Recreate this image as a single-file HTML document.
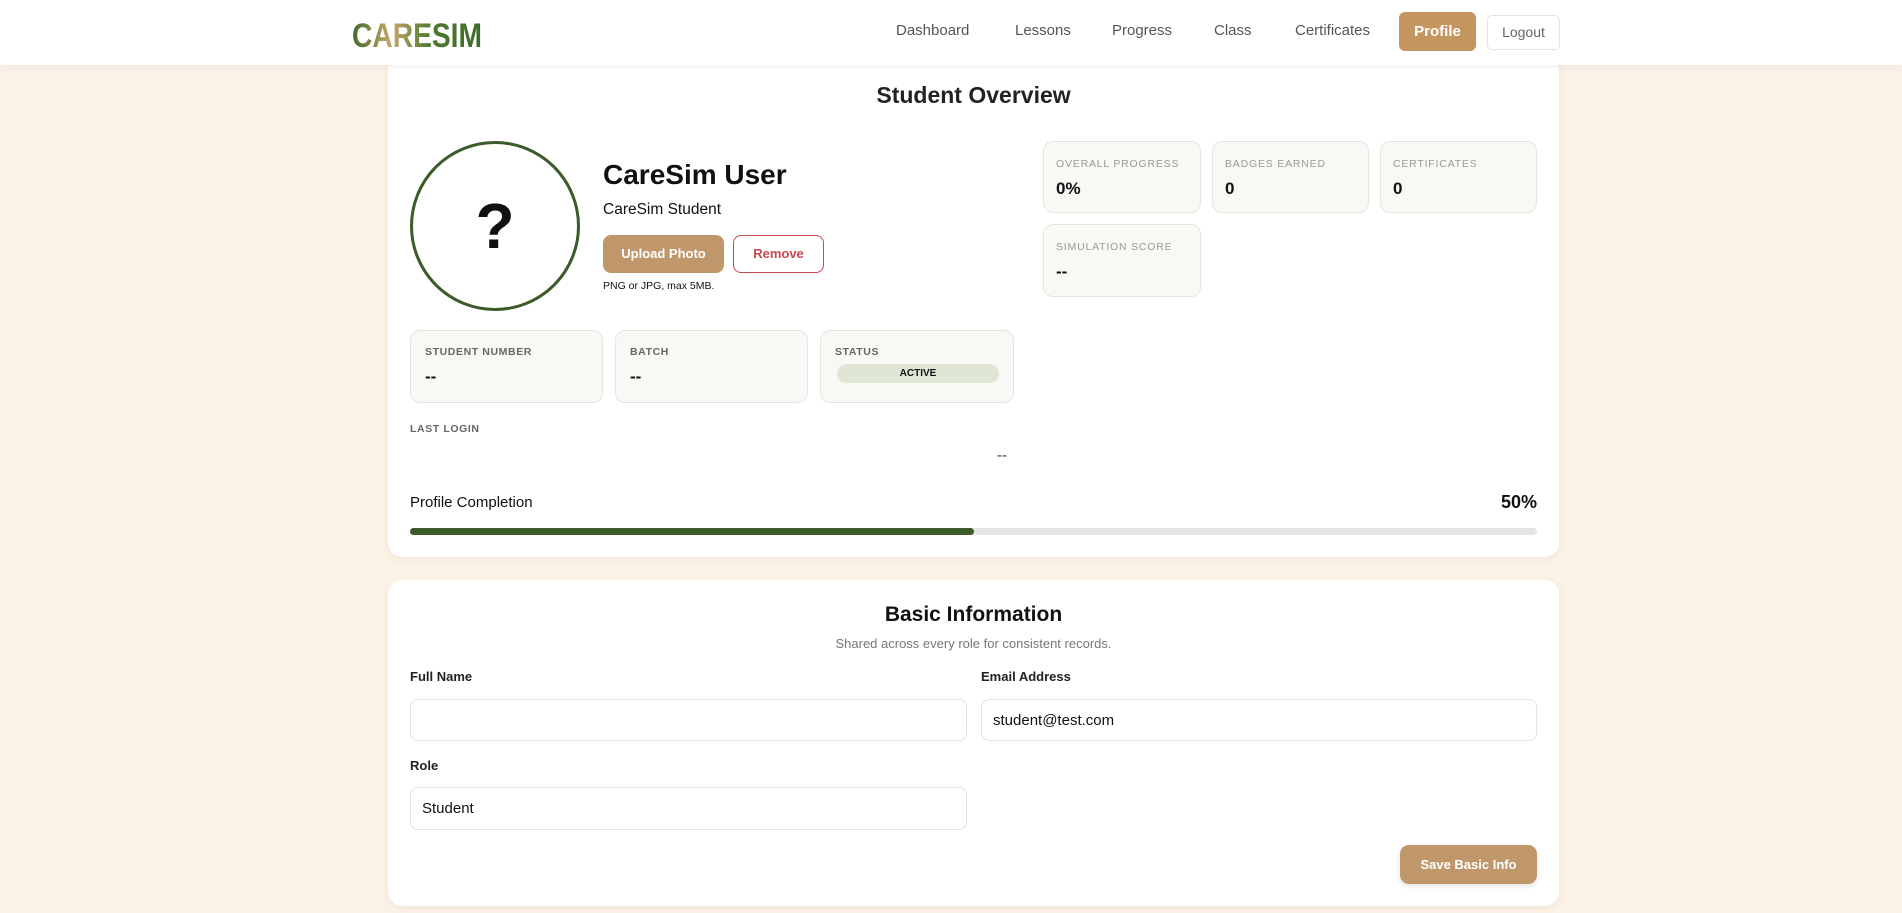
<!DOCTYPE html>
<html><head><meta charset="utf-8"><style>
*{box-sizing:border-box;margin:0;padding:0}
body{width:1902px;height:913px;overflow:hidden;background:#fcf3e8;font-family:"Liberation Sans",sans-serif;color:#111;position:relative}
.a{position:absolute}
.nav{left:0;top:0;width:1902px;height:65px;background:#fff;box-shadow:0 2px 8px rgba(0,0,0,.05);z-index:5}
.nl{top:22px;font-size:15px;color:#555}
.card{background:#fff;border-radius:14px;box-shadow:0 2px 10px rgba(150,120,80,.12)}
.sc{background:#f8f8f4;border:1px solid #e6e6e0;border-radius:10px}
.lab{font-size:10.5px;letter-spacing:.8px;color:#999;text-transform:uppercase}
.lab2{font-size:10.5px;letter-spacing:.6px;color:#666;font-weight:bold}
.val{font-size:17px;font-weight:bold;color:#111}
.inp{background:#fff;border:1px solid #e3e3e3;border-radius:8px;font-size:15px;padding-left:11px;display:flex;align-items:center}
.fl{font-size:13px;font-weight:bold;color:#222}
</style></head><body>
<div class="a nav">
<svg class="a" style="left:350px;top:14px" width="140" height="40"><defs><linearGradient id="g" x1="0" x2="1"><stop offset="0" stop-color="#3f6a2a"/><stop offset=".3" stop-color="#c9a56a"/><stop offset=".6" stop-color="#4d7a30"/><stop offset="1" stop-color="#3f6a2a"/></linearGradient></defs><text x="2" y="33" font-family="Liberation Sans" font-weight="bold" font-size="34" fill="url(#g)" textLength="130" lengthAdjust="spacingAndGlyphs">CARESIM</text></svg>
<div class="a nl" style="left:896px">Dashboard</div>
<div class="a nl" style="left:1015px">Lessons</div>
<div class="a nl" style="left:1112px">Progress</div>
<div class="a nl" style="left:1214px">Class</div>
<div class="a nl" style="left:1295px">Certificates</div>
<div class="a" style="left:1399px;top:12px;width:77px;height:39px;background:#c4955f;border-radius:6px;color:#fff;font-weight:bold;font-size:15px;text-align:center;line-height:39px">Profile</div>
<div class="a" style="left:1487px;top:15px;width:73px;height:35px;border:1px solid #e3e3e3;border-radius:5px;color:#666;font-size:14px;text-align:center;line-height:33px">Logout</div>
</div>

<div class="a card" style="left:388px;top:55px;width:1171px;height:502px"></div>
<div class="a" style="left:388px;top:82px;width:1171px;text-align:center;font-size:23px;font-weight:bold;color:#222">Student Overview</div>
<div class="a" style="left:410px;top:141px;width:170px;height:170px;border:3px solid #3d5a2a;border-radius:50%;text-align:center;line-height:164px;font-size:64px;font-weight:bold">?</div>
<div class="a" style="left:603px;top:159px;font-size:28px;font-weight:bold">CareSim User</div>
<div class="a" style="left:603px;top:201px;font-size:15.5px">CareSim Student</div>
<div class="a" style="left:603px;top:235px;width:121px;height:38px;background:#c0976b;border-radius:8px;color:#fff;font-weight:bold;font-size:13px;text-align:center;line-height:38px">Upload Photo</div>
<div class="a" style="left:733px;top:235px;width:91px;height:38px;border:1px solid #c9474f;border-radius:8px;color:#c9474f;font-weight:bold;font-size:13px;text-align:center;line-height:36px">Remove</div>
<div class="a" style="left:603px;top:280px;font-size:10.5px">PNG or JPG, max 5MB.</div>

<div class="a sc" style="left:1043px;top:141px;width:158px;height:72px"><div class="a lab" style="left:12px;top:16px">Overall Progress</div><div class="a val" style="left:12px;top:37px">0%</div></div>
<div class="a sc" style="left:1212px;top:141px;width:157px;height:72px"><div class="a lab" style="left:12px;top:16px">Badges Earned</div><div class="a val" style="left:12px;top:37px">0</div></div>
<div class="a sc" style="left:1380px;top:141px;width:157px;height:72px"><div class="a lab" style="left:12px;top:16px">Certificates</div><div class="a val" style="left:12px;top:37px">0</div></div>
<div class="a sc" style="left:1043px;top:224px;width:158px;height:73px"><div class="a lab" style="left:12px;top:16px">Simulation Score</div><div class="a val" style="left:12px;top:37px">--</div></div>

<div class="a sc" style="left:410px;top:330px;width:193px;height:73px"><div class="a lab2" style="left:14px;top:15px">STUDENT NUMBER</div><div class="a val" style="left:14px;top:36px">--</div></div>
<div class="a sc" style="left:615px;top:330px;width:193px;height:73px"><div class="a lab2" style="left:14px;top:15px">BATCH</div><div class="a val" style="left:14px;top:36px">--</div></div>
<div class="a sc" style="left:820px;top:330px;width:194px;height:73px"><div class="a lab2" style="left:14px;top:15px">STATUS</div><div class="a" style="left:16px;top:33px;width:162px;height:19px;background:#dfe6d4;border-radius:10px;font-size:10px;font-weight:bold;text-align:center;line-height:19px">ACTIVE</div></div>
<div class="a lab2" style="left:410px;top:423px">LAST LOGIN</div>
<div class="a" style="left:997px;top:447px;font-size:15px;color:#333">--</div>
<div class="a" style="left:410px;top:494px;font-size:15px">Profile Completion</div>
<div class="a" style="left:1490px;top:492px;width:47px;text-align:right;font-size:18px;font-weight:bold">50%</div>
<div class="a" style="left:410px;top:528px;width:1127px;height:7px;background:#e5e5e8;border-radius:4px"><div style="width:564px;height:7px;background:#3d5a2a;border-radius:4px"></div></div>

<div class="a card" style="left:388px;top:580px;width:1171px;height:326px"></div>
<div class="a" style="left:388px;top:603px;width:1171px;text-align:center;font-size:21px;font-weight:bold">Basic Information</div>
<div class="a" style="left:388px;top:636px;width:1171px;text-align:center;font-size:13px;color:#777">Shared across every role for consistent records.</div>
<div class="a fl" style="left:410px;top:669px">Full Name</div>
<div class="a fl" style="left:981px;top:669px">Email Address</div>
<div class="a inp" style="left:410px;top:699px;width:557px;height:42px"></div>
<div class="a inp" style="left:981px;top:699px;width:556px;height:42px">student@test.com</div>
<div class="a fl" style="left:410px;top:758px">Role</div>
<div class="a inp" style="left:410px;top:787px;width:557px;height:43px">Student</div>
<div class="a" style="left:1400px;top:845px;width:137px;height:39px;background:#c0976b;border-radius:9px;color:#fff;font-weight:bold;font-size:13px;text-align:center;line-height:39px;box-shadow:0 2px 6px rgba(0,0,0,.12)">Save Basic Info</div>
</body></html>
